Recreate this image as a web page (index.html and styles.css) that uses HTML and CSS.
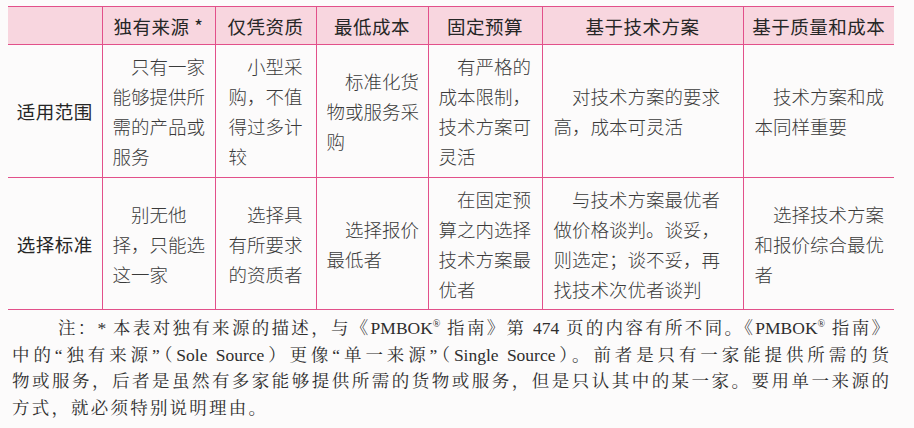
FILE: index.html
```html
<!DOCTYPE html>
<html lang="zh-CN">
<head>
<meta charset="utf-8">
<title>采购方式比较</title>
<link rel="stylesheet" href="styles.css">
</head>
<body>
<div class="page">
  <table class="cmp">
    <colgroup>
      <col class="c0"><col class="c1"><col class="c2"><col class="c3"><col class="c4"><col class="c5"><col class="c6">
    </colgroup>
    <thead>
      <tr class="head">
        <th></th>
        <th>独有来源 *</th>
        <th>仅凭资质</th>
        <th>最低成本</th>
        <th>固定预算</th>
        <th>基于技术方案</th>
        <th>基于质量和成本</th>
      </tr>
    </thead>
    <tbody>
      <tr class="r1">
        <th class="rowh">适用范围</th>
        <td class="p10"><p>只有一家<br>能够提供所<br>需的产品或<br>服务</p></td>
        <td class="p13"><p>小型采<br>购，不值<br>得过多计<br>较</p></td>
        <td class="p10"><p>标准化货<br>物或服务采<br>购</p></td>
        <td class="p10"><p>有严格的<br>成本限制，<br>技术方案可<br>灵活</p></td>
        <td class="p11"><p>对技术方案的要求<br>高，成本可灵活</p></td>
        <td class="p11"><p>技术方案和成<br>本同样重要</p></td>
      </tr>
      <tr class="r2">
        <th class="rowh">选择标准</th>
        <td class="p10"><p>别无他<br>择，只能选<br>这一家</p></td>
        <td class="p13"><p>选择具<br>有所要求<br>的资质者</p></td>
        <td class="p10"><p>选择报价<br>最低者</p></td>
        <td class="p10"><p>在固定预<br>算之内选择<br>技术方案最<br>优者</p></td>
        <td class="p11"><p>与技术方案最优者<br>做价格谈判。谈妥，<br>则选定；谈不妥，再<br>找技术次优者谈判</p></td>
        <td class="p11"><p>选择技术方案<br>和报价综合最优<br>者</p></td>
      </tr>
    </tbody>
  </table>
  <div class="note">
    <p class="nl first">注：* 本表对独有来源的描述，与《PMBOK<sup>®</sup> 指南》第 474 页的内容有所不同。《PMBOK<sup>®</sup> 指南》</p>
    <p class="nl">中的“独有来源”（Sole Source）更像“单一来源”（Single Source）。前者是只有一家能提供所需的货</p>
    <p class="nl">物或服务，后者是虽然有多家能够提供所需的货物或服务，但是只认其中的某一家。要用单一来源的</p>
    <p class="nl last">方式，就必须特别说明理由。</p>
  </div>
</div>
</body>
</html>
```

FILE: styles.css
```css
html, body {
  margin: 0;
  padding: 0;
  background: #fcfbfb;
}
.page {
  width: 914px;
  height: 428px;
  overflow: hidden;
  padding: 6px 0 0 8px;
  box-sizing: border-box;
  color: #2b2b2b;
  font-family: "Noto Sans CJK SC", "Noto Sans", sans-serif;
}
.cmp {
  border-collapse: collapse;
  table-layout: fixed;
  width: 886px;
}
.c0 { width: 94px; }
.c1 { width: 113px; }
.c2 { width: 101px; }
.c3 { width: 112px; }
.c4 { width: 114px; }
.c5 { width: 201px; }
.c6 { width: 151px; }

.cmp th, .cmp td {
  border-top: 1.5px solid #e2508a;
  border-bottom: 1.5px solid #e2508a;
  border-left: 1.5px solid #e2508a;
  padding: 0;
  vertical-align: middle;
}
.cmp tr > :first-child {
  border-left: none;
}
.head th {
  background: #f8d6df;
  height: 37px;
  font-size: 18.5px;
  font-weight: 400;
  text-align: center;
  letter-spacing: 0.5px;
  line-height: 24px;
  color: #262626;
}
.r1 > * { height: 132px; }
.r2 > * { height: 131px; }
.rowh {
  font-size: 18.5px;
  font-weight: 400;
  text-align: center;
  letter-spacing: 0.5px;
  color: #262626;
}
.cmp td p {
  margin: 0;
  font-size: 18.5px;
  font-weight: 300;
  line-height: 30px;
  text-indent: 1em;
  white-space: nowrap;
  color: #3a3a3a;
}
.p10 { padding-left: 10px !important; }
.p11 { padding-left: 11px !important; }
.p13 { padding-left: 13px !important; }

.note {
  width: 877px;
  margin: 5px 0 0 4px;
  font-family: "Liberation Serif", "Noto Serif CJK SC", "Noto Sans CJK SC", serif;
  font-size: 17.5px;
  color: #2e2e2e;
}
.nl {
  margin: 0;
  line-height: 26.5px;
  text-align: justify;
  text-align-last: justify;
  white-space: nowrap;
}
.nl.first {
  text-indent: 46px;
}
.nl.last {
  text-align-last: left;
  letter-spacing: 2.2px;
}
.nl sup {
  font-size: 10px;
  line-height: 0;
  vertical-align: 7px;
}
```
